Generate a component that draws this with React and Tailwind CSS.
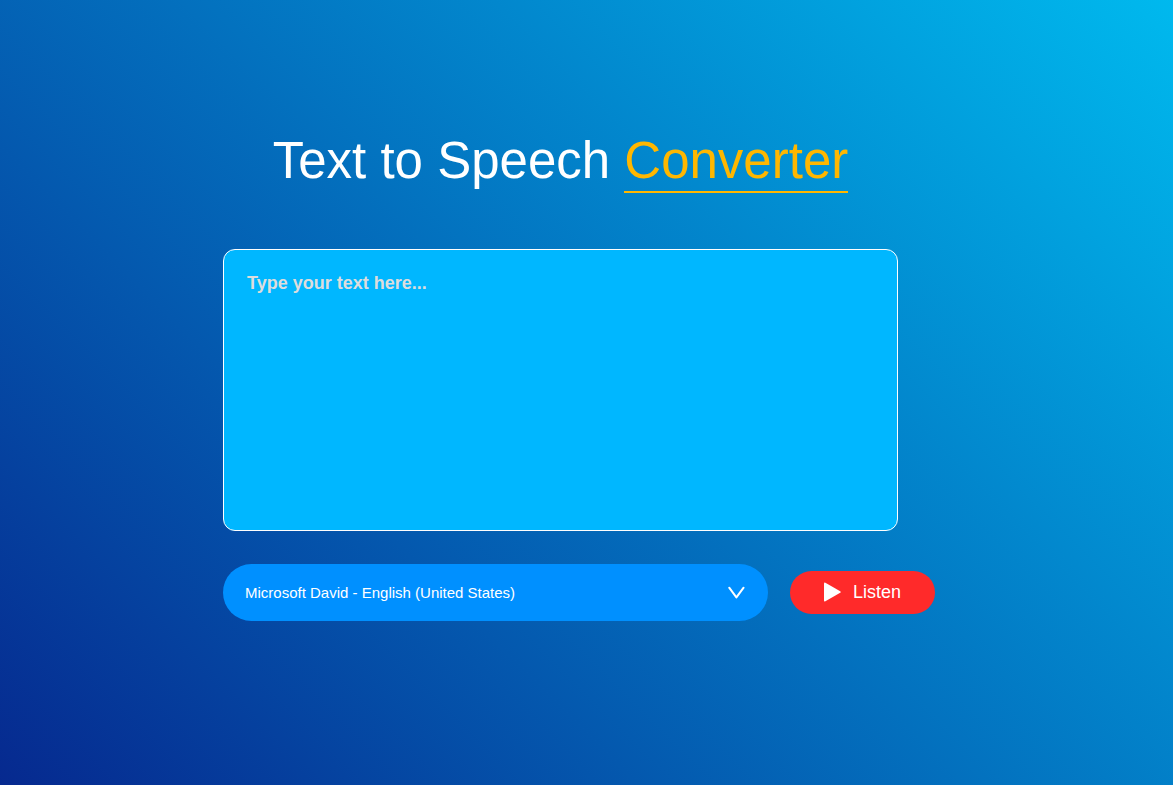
import { useState } from "react";

export default function App() {
  const [text, setText] = useState("");

  const listen = () => {
    if (window.speechSynthesis && text) {
      window.speechSynthesis.speak(new SpeechSynthesisUtterance(text));
    }
  };

  return (
    <main className="flex min-h-screen flex-col items-center justify-center bg-[linear-gradient(45deg,#06298f,#00b9ee)] pr-[52px] pb-[34px] font-['Liberation_Sans',Arial,sans-serif] text-white">
      <div className="flex w-full max-w-[675px] flex-col">
        <h1 className="mb-14 text-center text-[51px] leading-[60px]">
          Text to Speech{" "}
          <span className="inline-block border-b-2 border-[#ffb700] text-[#ffb700]">Converter</span>
        </h1>
        <textarea
          aria-label="Text to speak"
          placeholder="Type your text here..."
          value={text}
          onChange={(e) => setText(e.target.value)}
          className="mb-[33px] block h-[282px] w-full resize-none rounded-xl border border-white bg-[#00b7ff] px-[23px] py-[22px] text-lg leading-[22px] font-bold text-white outline-none placeholder:text-[#dddddd]"
        />
        <div className="flex items-center gap-[22px]">
          <div className="grid w-[545px] shrink-0 items-center">
            <select
              aria-label="Voice"
              className="col-start-1 row-start-1 h-[57px] w-full appearance-none rounded-full bg-[#0090ff] px-[22px] pt-0.5 text-[15px] text-white outline-none"
            >
              <option>Microsoft David - English (United States)</option>
            </select>
            <svg
              viewBox="0 0 18 14"
              aria-hidden="true"
              className="pointer-events-none col-start-1 row-start-1 mr-[23px] h-[14px] w-[18px] justify-self-end"
              fill="none"
              stroke="currentColor"
              strokeWidth="2"
            >
              <path d="M2.2 2.7 9.4 12.4 16.6 2.7" strokeLinejoin="round" strokeLinecap="round" />
            </svg>
          </div>
          <button
            type="button"
            onClick={listen}
            className="flex h-[43px] w-[145px] shrink-0 items-center justify-center gap-3 rounded-full bg-[#ff2a2a] text-lg text-white"
          >
            <svg viewBox="0 0 17 20" aria-hidden="true" className="h-5 w-[17px]" fill="currentColor">
              <path d="M0 1.6Q0 0 1.4 0.7L16.2 9.2Q17.4 10 16.2 10.8L1.4 19.3Q0 20 0 18.4Z" />
            </svg>
            Listen
          </button>
        </div>
      </div>
    </main>
  );
}
